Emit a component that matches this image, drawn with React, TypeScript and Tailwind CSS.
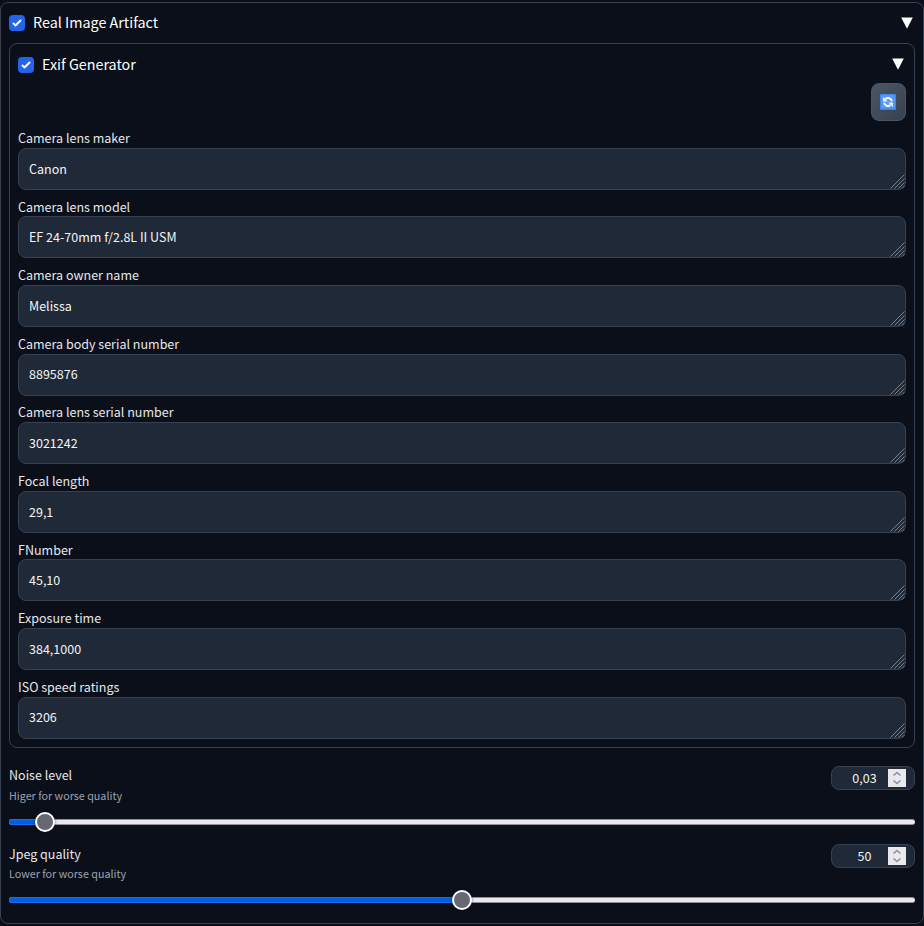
const fields: [string, string][] = [
  ['Camera lens maker', 'Canon'],
  ['Camera lens model', 'EF 24-70mm f/2.8L II USM'],
  ['Camera owner name', 'Melissa'],
  ['Camera body serial number', '8895876'],
  ['Camera lens serial number', '3021242'],
  ['Focal length', '29,1'],
  ['FNumber', '45,10'],
  ['Exposure time', '384,1000'],
  ['ISO speed ratings', '3206'],
];

function Check() {
  return (
    <span className="block size-4 shrink-0 rounded-[4px] bg-[#2563eb]">
      <svg viewBox="0 0 16 16" className="block size-4" fill="white">
        <path d="M12.207 4.793a1 1 0 010 1.414l-5 5a1 1 0 01-1.414 0l-2-2a1 1 0 011.414-1.414L6.5 9.086l4.293-4.293a1 1 0 011.414 0z" />
      </svg>
    </span>
  );
}

function Triangle() {
  return (
    <svg viewBox="0 0 12 12" className="block h-3 w-3" fill="white">
      <path d="M0.2 0.6H11.8L6 11.8z" />
    </svg>
  );
}

function Field({ label, value }: { label: string; value: string }) {
  return (
    <div className="h-[68.6px]">
      <div className="h-[18.8px] whitespace-nowrap text-[12.53px] leading-[18px] text-[#e5e7eb]">{label}</div>
      <div className="flex h-[42px] items-end justify-between rounded-[8px] border border-[#374151] bg-[#1f2937]">
        <span className="self-center whitespace-nowrap pb-[0.5px] pl-[10px] text-[12.53px] leading-[18px] text-[#f3f4f6]">{value}</span>
        <svg viewBox="0 0 15 15" className="block size-[15px]" fill="none" stroke="#858b93" strokeWidth="0.9">
          <path d="M0.5 14.5L14.5 0.5M4.5 14.5L14.5 4.5M8.5 14.5L14.5 8.5M12 14.5L14.5 12" />
        </svg>
      </div>
    </div>
  );
}

function Slider({ label, info, value, position }: { label: string; info: string; value: string; position: number }) {
  return (
    <div className="h-[78.2px]">
      <div className="flex h-[45px] justify-between">
        <div>
          <div className="-mt-[0.6px] h-[20.6px] whitespace-nowrap text-[12.53px] leading-[20px] text-[#e5e7eb]">{label}</div>
          <div className="whitespace-nowrap text-[10.74px] leading-[19px] text-[#9ca3af]">{info}</div>
        </div>
        <div className="flex h-6 w-[84px] items-center justify-end rounded-[8px] border border-[#374151] bg-[#1f2937] pr-2">
          <span className="w-[47px] text-center text-[12.53px] leading-[20px] text-[#f3f4f6]">{value}</span>
          <span className="block h-[18px] w-[18px] bg-[#e9e9ed]">
            <svg viewBox="0 0 18 18" className="block size-[18px]" fill="none" stroke="#8f8f9d" strokeWidth="1.6">
              <path d="M5.5 6.5L9 3.5L12.5 6.5M5.5 11.5L9 14.5L12.5 11.5" />
            </svg>
          </span>
        </div>
      </div>
      <div className="relative mt-[8px] h-[6px] rounded-full border-y border-[#8f8f9d] bg-[#e9e9ed]">
        <div className="absolute -top-px left-0 h-[6px] rounded-full border-y border-[#1b6cf2] bg-[#0060df]" style={{ width: position }} />
        <div
          className="absolute -top-[8px] size-5 rounded-full border-2 border-white bg-[#676774] shadow-[0_0_3px_rgba(0,0,0,0.5)]"
          style={{ left: position - 10 }}
        />
      </div>
    </div>
  );
}

export default function App() {
  return (
    <main className="h-[926px] w-[924px] overflow-hidden bg-[#0b0f19] pt-[2px] font-['Noto_Sans_CJK_SC',sans-serif]">
      <section className="h-[922px] w-full rounded-[8px] border border-[#374151] px-2">
        <header className="flex h-10 items-center justify-between pr-[2px]">
          <div className="flex items-center gap-2">
            <Check />
            <h1 className="-mt-[2px] whitespace-nowrap text-[14.33px] leading-[22px] text-white">Real Image Artifact</h1>
          </div>
          <Triangle />
        </header>
        <section className="h-[705px] rounded-[8px] border border-[#374151] px-2">
          <header className="flex h-[39px] items-center justify-between pr-[2px] pt-[2px]">
            <div className="flex items-center gap-2">
              <Check />
              <h2 className="-mt-[2px] whitespace-nowrap text-[14.33px] leading-[22px] text-white">Exif Generator</h2>
            </div>
            <div className="pb-[2px]">
              <Triangle />
            </div>
          </header>
          <div className="flex h-[46px] justify-end">
            <button className="flex h-[38px] w-[35px] items-center justify-center rounded-[8px] border border-[#4b5563] bg-linear-to-br from-[#4b5563] to-[#374151] pr-px">
              <svg viewBox="0 0 16 16" className="block size-4">
                <rect width="16" height="16" rx="0.8" fill="#3b82e9" />
                <rect x="0.8" y="0.8" width="14.4" height="13.8" rx="0.6" fill="#549af5" />
                <path d="M11.9 7.2A4 4 0 0 0 5.4 4.9M4.1 8.8A4 4 0 0 0 10.6 11.1" fill="none" stroke="#f3f4fb" strokeWidth="2" />
                <path d="M3.1 3V7.6H7.7zM12.9 13V8.4H8.3z" fill="#f3f4fb" />
              </svg>
            </button>
          </div>
          {fields.map(([label, value]) => (
            <Field key={label} label={label} value={value} />
          ))}
        </section>
        <div className="pt-[18px]">
          <Slider label="Noise level" info="Higer for worse quality" value="0,03" position={36.4} />
          <Slider label="Jpeg quality" info="Lower for worse quality" value="50" position={452.5} />
        </div>
      </section>
    </main>
  );
}
